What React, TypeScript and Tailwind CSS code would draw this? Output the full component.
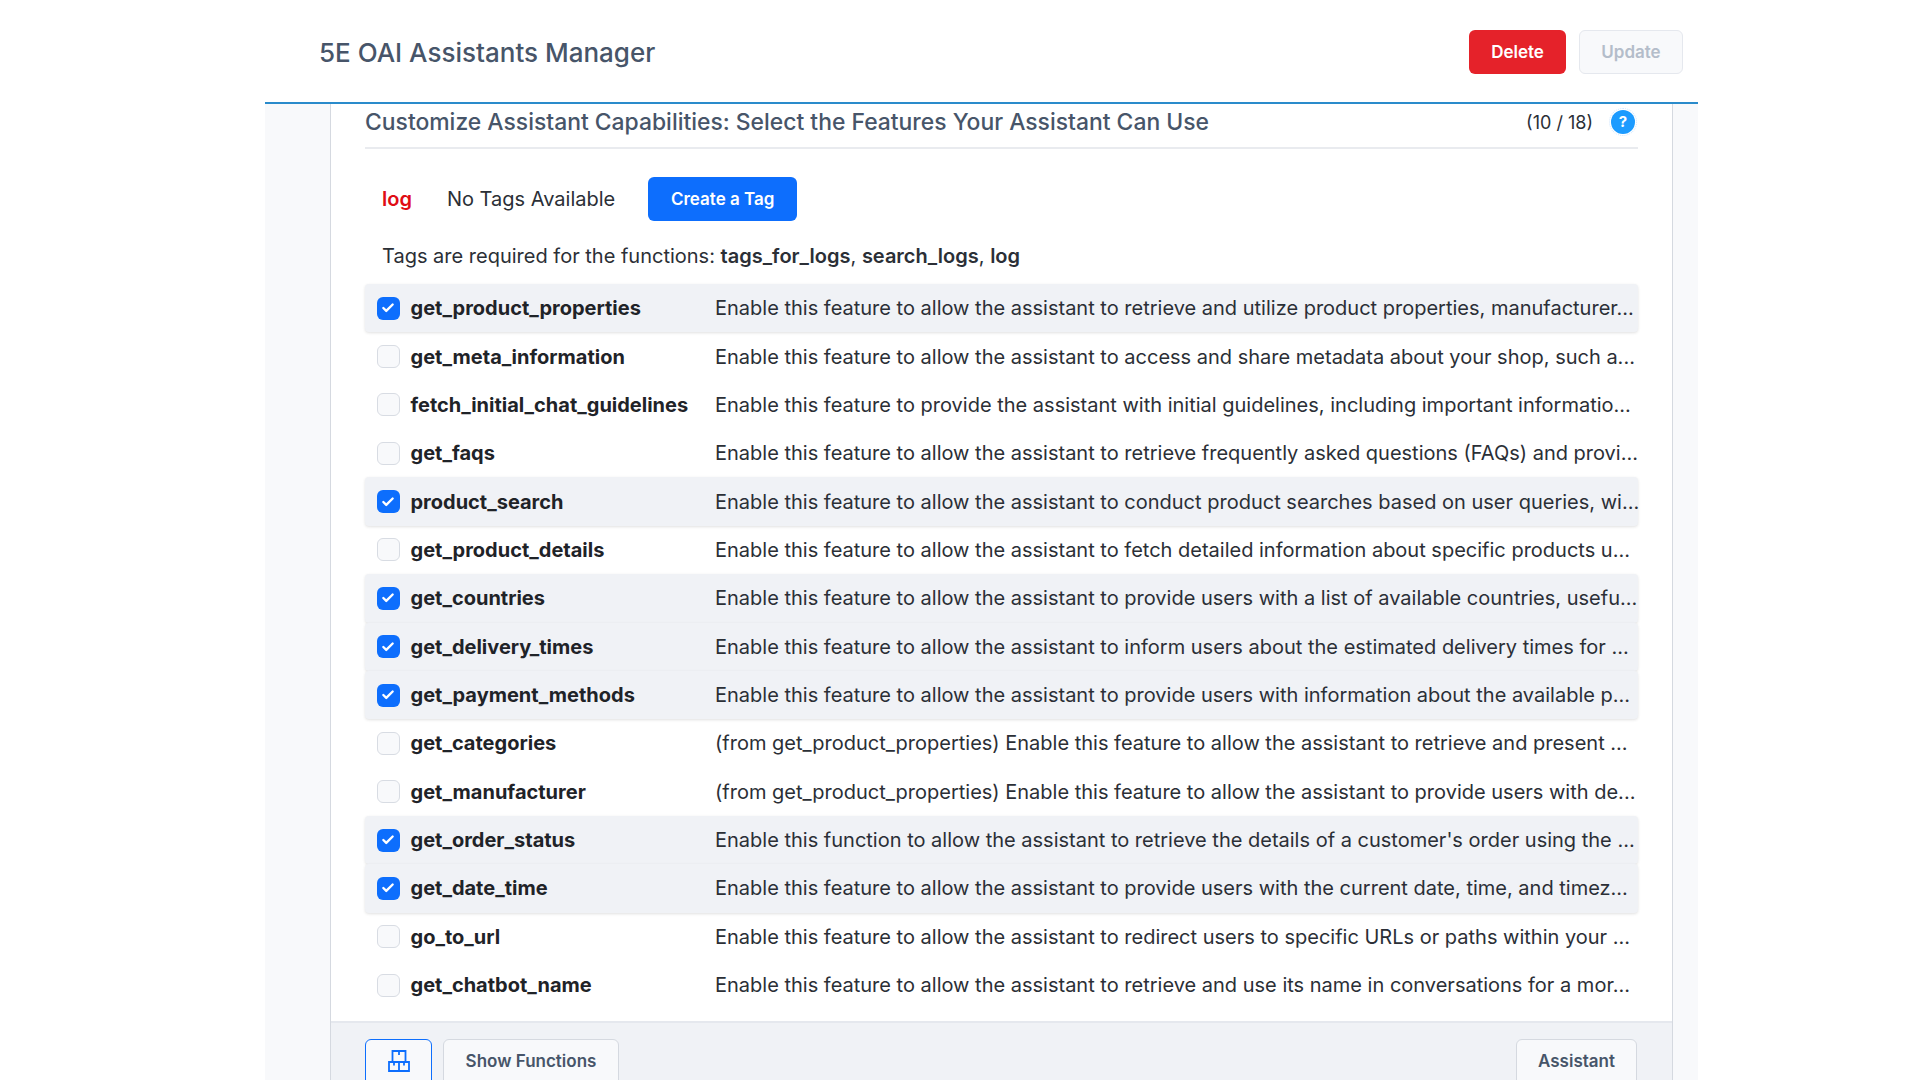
import { Check } from 'lucide-react';

const features = [
  { name: 'get_product_properties', on: true, desc: 'Enable this feature to allow the assistant to retrieve and utilize product properties, manufacturer...' },
  { name: 'get_meta_information', on: false, desc: 'Enable this feature to allow the assistant to access and share metadata about your shop, such a...' },
  { name: 'fetch_initial_chat_guidelines', on: false, desc: 'Enable this feature to provide the assistant with initial guidelines, including important informatio...' },
  { name: 'get_faqs', on: false, desc: 'Enable this feature to allow the assistant to retrieve frequently asked questions (FAQs) and provi...' },
  { name: 'product_search', on: true, desc: 'Enable this feature to allow the assistant to conduct product searches based on user queries, wi...' },
  { name: 'get_product_details', on: false, desc: 'Enable this feature to allow the assistant to fetch detailed information about specific products u...' },
  { name: 'get_countries', on: true, desc: 'Enable this feature to allow the assistant to provide users with a list of available countries, usefu...' },
  { name: 'get_delivery_times', on: true, desc: 'Enable this feature to allow the assistant to inform users about the estimated delivery times for ...' },
  { name: 'get_payment_methods', on: true, desc: 'Enable this feature to allow the assistant to provide users with information about the available p...' },
  { name: 'get_categories', on: false, desc: '(from get_product_properties) Enable this feature to allow the assistant to retrieve and present ...' },
  { name: 'get_manufacturer', on: false, desc: '(from get_product_properties) Enable this feature to allow the assistant to provide users with de...' },
  { name: 'get_order_status', on: true, desc: "Enable this function to allow the assistant to retrieve the details of a customer's order using the ..." },
  { name: 'get_date_time', on: true, desc: 'Enable this feature to allow the assistant to provide users with the current date, time, and timez...' },
  { name: 'go_to_url', on: false, desc: 'Enable this feature to allow the assistant to redirect users to specific URLs or paths within your ...' },
  { name: 'get_chatbot_name', on: false, desc: 'Enable this feature to allow the assistant to retrieve and use its name in conversations for a mor...' },
];

function FeatureRow({ name, on, desc }: { name: string; on: boolean; desc: string }) {
  return (
    <li className={`flex h-[48.36px] items-center rounded-sm pl-[11.5px] ${on ? 'bg-[#f0f2f6] shadow-[0_1px_3px_rgba(0,0,0,0.12)]' : ''}`}>
      {on ? (
        <span className="flex h-[23px] w-[23px] shrink-0 items-center justify-center rounded-md bg-[#0d6efd]">
          <Check className="h-3.5 w-3.5 text-white" strokeWidth={4} aria-hidden="true" />
        </span>
      ) : (
        <span className="h-[23px] w-[23px] shrink-0 rounded-md border border-[#d8dce3] bg-[#f8f9fb]" />
      )}
      <span className="ml-[11px] w-[304.5px] shrink-0 text-[20px] font-bold text-[#1f2328]">{name}</span>
      <span className="min-w-0 flex-1 whitespace-nowrap text-[20px] text-[#2b2f36]">{desc}</span>
    </li>
  );
}

export default function App() {
  return (
    <div className="h-screen overflow-hidden bg-white font-['Inter',sans-serif]">
      <div className="ml-[265px] flex h-full w-[1433px] flex-col">
        <header className="flex h-[102px] shrink-0 items-center justify-between pt-0.5 pl-[54px] pr-[15px]">
          <h1 className="text-[26px] font-medium text-[#475569]">5E OAI Assistants Manager</h1>
          <div className="flex gap-[13px]">
            <button type="button" className="h-11 w-[97px] rounded-md bg-[#e5222a] pt-px text-[17px] font-semibold text-white">Delete</button>
            <button type="button" className="h-11 w-[104px] rounded-md border border-[#e5e8ee] bg-[#f8f9fb] pt-px text-[17px] font-semibold text-[#b4bdca]">Update</button>
          </div>
        </header>
        <div className="h-0.5 shrink-0 bg-[#2a8bcb]" />
        <div className="flex-1 bg-[#f8f9fb] px-[65px]">
          <section className="h-full w-[1343px] border-x border-[#d5d9e0] bg-white">
            <div className="px-[34px]">
              <div className="flex h-[45px] items-center justify-between border-b-2 border-[#e9ebef] pb-[7px]">
                <h2 className="text-[22.9px] font-medium text-[#475569]">Customize Assistant Capabilities: Select the Features Your Assistant Can Use</h2>
                <div className="flex items-center gap-[18px] pr-[3px]">
                  <span className="text-[18px] text-[#2b2f36]">(10 / 18)</span>
                  <span className="flex h-6 w-6 items-center justify-center rounded-full bg-[#1c9bff] text-[15px] font-bold text-white outline-1 outline-offset-1 outline-dotted outline-[#cfe6ff]">?</span>
                </div>
              </div>
              <div className="mt-7 flex items-center pl-[17px] text-[20px]">
                <span className="font-semibold text-[#e00d14]">log</span>
                <span className="ml-[35px] text-[#2b2f36]">No Tags Available</span>
                <button type="button" className="ml-[33px] h-11 w-[149px] rounded-md bg-[#0d6efd] pt-px text-[17px] font-semibold text-white">Create a Tag</button>
              </div>
              <p className="mt-5 pl-[17px] text-[20px] text-[#2b2f36]">
                Tags are required for the functions: <b className="font-semibold">tags_for_logs</b>, <b className="font-semibold">search_logs</b>, <b className="font-semibold">log</b>
              </p>
              <ul className="mt-[13px]">
                {features.map((f) => (
                  <FeatureRow key={f.name} {...f} />
                ))}
              </ul>
            </div>
            <footer className="mt-3 flex h-40 gap-[11px] border-t-2 border-[#e5e8ee] bg-[#f0f2f6] px-[34px] pt-4">
              <button type="button" className="flex h-16 w-[67px] items-start justify-center rounded-md border border-[#0d6efd] bg-[#f8f9fb] pt-2.5">
                <svg viewBox="0 0 22 22" className="h-[22px] w-[22px] text-[#0d6efd]" fill="none" stroke="currentColor" strokeWidth="1.8" aria-hidden="true">
                  <path d="M4.5 1h13v11h-13zM1 12h10v9H1zM11 12h10v9H11zM11 1v4M6 12v3.5M16 12v3.5" />
                </svg>
              </button>
              <button type="button" className="h-16 w-[176px] rounded-md border border-[#d5d9e0] bg-[#f8f9fb] pb-[19px] text-[17px] font-semibold text-[#475569]">Show Functions</button>
              <button type="button" className="ml-auto mr-px h-16 w-[121px] rounded-md border border-[#d5d9e0] bg-[#f8f9fb] pb-[19px] text-[17px] font-semibold text-[#475569]">Assistant</button>
            </footer>
          </section>
        </div>
      </div>
    </div>
  );
}
